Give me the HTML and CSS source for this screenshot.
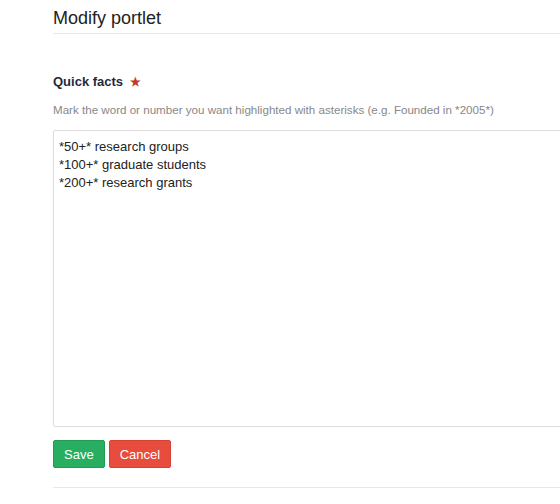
FILE: index.html
```html
<!DOCTYPE html>
<html>
<head>
<meta charset="utf-8">
<link rel="stylesheet" href="styles.css">
</head>
<body>
<div class="page">
  <h1 class="title">Modify portlet</h1>
  <form class="form">
    <div class="field">
      <label class="label">Quick facts <span class="req">&#9733;</span></label>
      <p class="help">Mark the word or number you want highlighted with asterisks (e.g. Founded in *2005*)</p>
      <textarea class="textarea">*50+* research groups
*100+* graduate students
*200+* research grants</textarea>
    </div>
    <div class="actions">
      <button type="button" class="btn btn-save">Save</button>
      <button type="button" class="btn btn-cancel">Cancel</button>
    </div>
  </form>
</div>
</body>
</html>
```
FILE: styles.css
```css
html, body {
  margin: 0;
  padding: 0;
  background: #fff;
  overflow: hidden;
}
body {
  font-family: "Liberation Sans", Arial, sans-serif;
  color: #333;
}
.page {
  margin-left: 53px;
  width: 620px;
}
.title {
  margin: 0;
  padding-top: 7px;
  height: 26px;
  font-size: 18px;
  font-weight: normal;
  line-height: 22px;
  color: #222;
  border-bottom: 1px solid #e8e8e8;
}
.form {
  padding-top: 40px;
  border-bottom: 1px solid #e8e8e8;
  padding-bottom: 19px;
}
.label {
  display: block;
  font-size: 13px;
  font-weight: bold;
  color: #1d2b3f;
  line-height: 16px;
}
.req {
  color: #c0392b;
  font-size: 12px;
  margin-left: 3px;
}
.help {
  margin: 13px 0 0;
  font-size: 11.6px;
  line-height: 14px;
  color: #888;
}
.textarea {
  display: block;
  box-sizing: border-box;
  margin-top: 13px;
  width: 100%;
  height: 297px;
  padding: 7px 5px;
  border: 1px solid #ddd;
  border-radius: 2px;
  font-family: "Liberation Sans", Arial, sans-serif;
  font-size: 13px;
  line-height: 18px;
  color: #222;
  resize: none;
  outline: none;
}
.actions {
  display: flex;
  gap: 4px;
  margin-top: 13px;
}
.btn {
  height: 28px;
  padding: 0 10px;
  border: 1px solid transparent;
  border-radius: 2px;
  font-family: "Liberation Sans", Arial, sans-serif;
  font-size: 13px;
  color: #fff;
}
.btn-save {
  background: #27ae60;
  border-color: #239a55;
}
.btn-cancel {
  background: #e74c3c;
  border-color: #d84232;
}
```
